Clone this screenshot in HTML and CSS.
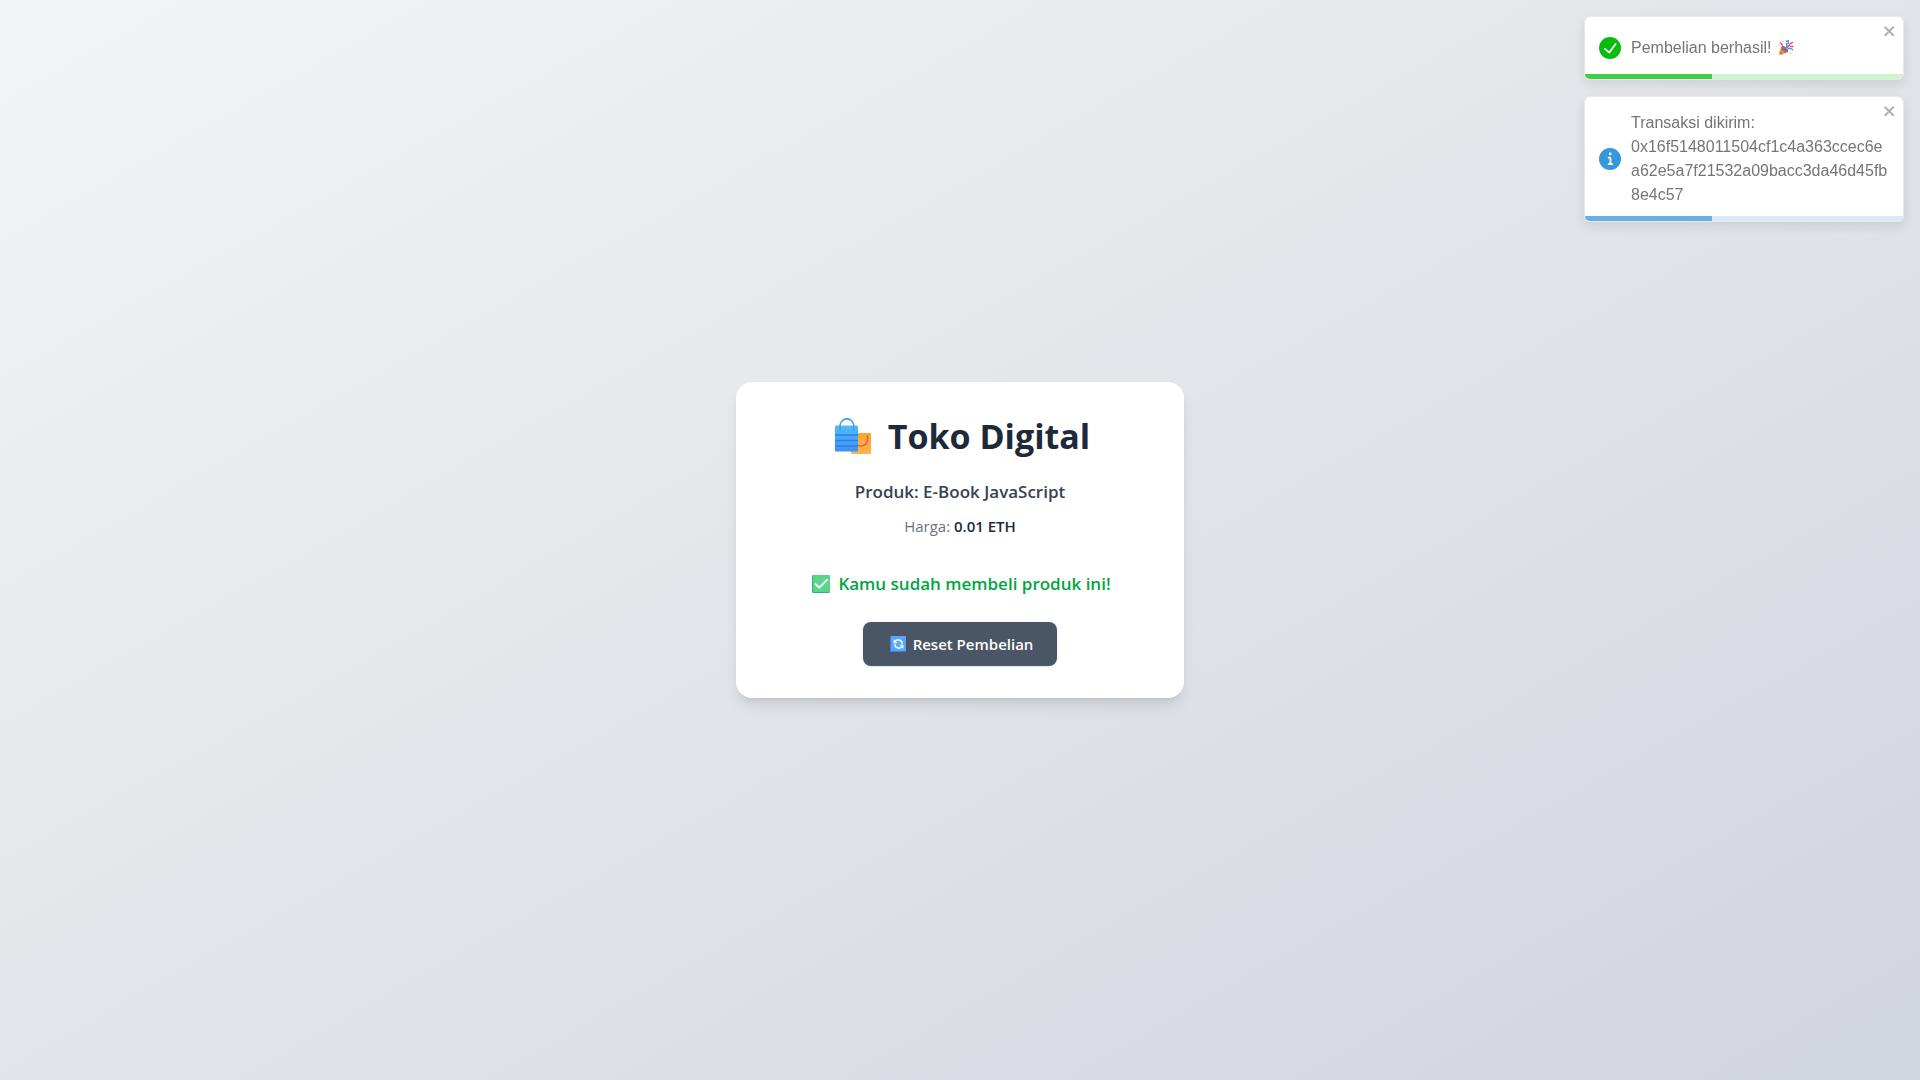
FILE: index.html
```html
<!DOCTYPE html>
<html lang="id">
<head>
  <meta charset="utf-8">
  <meta name="viewport" content="width=device-width, initial-scale=1">
  <title>Toko Digital</title>
  <link rel="stylesheet" href="styles.css">
</head>
<body>
  <main class="page">
    <section class="card">
      <h1 class="title">
        <svg class="title-icon" viewBox="0 0 48 40" aria-hidden="true">
          <defs>
            <linearGradient id="bag-blue" x1="0" y1="0" x2="0" y2="1">
              <stop offset="0" stop-color="#50bdfa"/>
              <stop offset="1" stop-color="#3f8ffb"/>
            </linearGradient>
            <linearGradient id="bag-orange" x1="0" y1="0" x2="0" y2="1">
              <stop offset="0" stop-color="#f9a431"/>
              <stop offset="1" stop-color="#ffb350"/>
            </linearGradient>
          </defs>
          <rect x="21" y="19" width="20" height="21" rx="1" fill="url(#bag-orange)"/>
          <path d="M37.500 22v3.500a6.500 6.500 0 0 1-10 5.500" fill="none" stroke="#ea5a34" stroke-width="1.400" stroke-linecap="round"/>
          <rect x="5" y="11.500" width="23" height="26" rx="1" fill="url(#bag-blue)"/>
          <path d="M5 21h23M5 26.500h23M5 32h23" stroke="#2f7de2" stroke-width="1.500"/>
          <path d="M10 16.500V12a6.800 7 0 0 1 13.800 0v4.500" fill="none" stroke="#3f9fe8" stroke-width="1.600" stroke-linecap="round"/>
        </svg>
        <span>Toko Digital</span>
      </h1>
      <p class="product">Produk: E-Book JavaScript</p>
      <p class="price">Harga: <strong class="amount">0.01 ETH</strong></p>
      <p class="status">
        <svg class="status-icon" viewBox="0 0 24 20" aria-hidden="true">
          <rect x="3" y="1" width="18" height="18" rx="1.500" fill="#3fa873"/>
          <rect x="4" y="1" width="17" height="17" rx="1.500" fill="#59d58c"/>
          <path d="M6.500 10l3.700 3.700 8-8" fill="none" stroke="#fff" stroke-width="1.800" stroke-linecap="round" stroke-linejoin="round"/>
        </svg>
        <span>Kamu sudah membeli produk ini!</span>
      </p>
      <button class="reset" type="button">
        <svg class="reset-icon" viewBox="0 0 22 18" aria-hidden="true">
          <rect x="3" y="1" width="16" height="16" rx="1" fill="#3d7ce0"/>
          <rect x="4" y="1" width="15" height="15" rx="1" fill="#58a6fb"/>
          <path d="M8 6.500c2-2.500 7-2 7.200 2.200M15 11.500c-2 2.500-7 2-7.200-2.200" fill="none" stroke="#e9f3ff" stroke-width="1.700"/>
          <path d="M6.500 4v4.200h4.200zM16.500 14V9.800h-4.200z" fill="#e9f3ff"/>
        </svg>
        <span>Reset Pembelian</span>
      </button>
    </section>
  </main>

  <aside class="toasts" aria-live="polite">
    <div class="toast toast-success" role="alert">
      <svg class="toast-icon" viewBox="0 0 24 24" aria-hidden="true">
        <path fill="currentColor" d="M12 0a12 12 0 1012 12A12.014 12.014 0 0012 0zm6.927 8.200l-6.845 9.289a1.011 1.011 0 01-1.430.188l-4.888-3.908a1 1 0 111.250-1.562l4.076 3.261 6.227-8.451a1 1 0 111.610 1.183z"/>
      </svg>
      <p class="message">
        Pembelian berhasil!
        <svg class="party" viewBox="0 0 16 16" aria-hidden="true">
          <path d="M0.500 15.500L3.500 6l6.500 6z" fill="#f5a030"/>
          <path d="M2.700 8.600l5 4.500M1.700 11.500l3.200 2.800" stroke="#a0668a" stroke-width="1.200"/>
          <ellipse cx="6.800" cy="9" rx="1.700" ry="4.200" transform="rotate(-45 6.800 9)" fill="#a0645a"/>
          <path d="M7 8.500c2-1.500 2.500-3.500 1-5.500M8 1.200l2.200-.4v3.200" fill="none" stroke="#2e9cf0" stroke-width="1.400"/>
          <path d="M9 9.500c2-1.500 4.500-1.200 6 .5" fill="none" stroke="#2e9cf0" stroke-width="1.400"/>
          <path d="M9 7.500c2-.2 2-2.500 3-3.500s2-.8 2.800-2M2.200 2.500l2.500 3" fill="none" stroke="#ee3ea0" stroke-width="1.400"/>
          <path d="M12 6.500h3.500" stroke="#ee3ea0" stroke-width="1.300"/>
          <circle cx="5" cy="1.500" r=".8" fill="#f9b23c"/>
          <circle cx="12.500" cy="13.500" r=".8" fill="#f9b23c"/>
          <circle cx="1" cy="5.500" r=".7" fill="#f9b23c"/>
        </svg>
      </p>
      <button class="close" type="button" aria-label="Tutup">
        <svg class="close-icon" viewBox="0 0 14 16" aria-hidden="true">
          <path fill="currentColor" fill-rule="evenodd" d="M7.710 8.230l3.750 3.750-1.480 1.480-3.750-3.750-3.750 3.750L1 11.980l3.750-3.750L1 4.480 2.480 3l3.750 3.750L9.980 3l1.480 1.480-3.750 3.750z"/>
        </svg>
      </button>
      <div class="track"><div class="bar" style="width: 40%"></div></div>
    </div>
    <div class="toast toast-info" role="alert">
      <svg class="toast-icon" viewBox="0 0 24 24" aria-hidden="true">
        <path fill="currentColor" d="M12 0a12 12 0 1012 12A12.013 12.013 0 0012 0zm.25 5a1.500 1.500 0 11-1.500 1.500 1.500 1.500 0 011.500-1.500zm2.250 13.500h-4a1 1 0 010-2h.75a.25.25 0 00.25-.25v-4.500a.25.25 0 00-.25-.25h-.75a1 1 0 010-2h1a2 2 0 012 2v4.750a.25.25 0 00.25.25h.75a1 1 0 110 2z"/>
      </svg>
      <p class="message">Transaksi dikirim: 0x16f5148011504cf1c4a363ccec6ea62e5a7f21532a09bacc3da46d45fb8e4c57</p>
      <button class="close" type="button" aria-label="Tutup">
        <svg class="close-icon" viewBox="0 0 14 16" aria-hidden="true">
          <path fill="currentColor" fill-rule="evenodd" d="M7.710 8.230l3.750 3.750-1.480 1.480-3.750-3.750-3.750 3.750L1 11.980l3.750-3.750L1 4.480 2.480 3l3.750 3.750L9.980 3l1.480 1.480-3.750 3.750z"/>
        </svg>
      </button>
      <div class="track"><div class="bar" style="width: 40%"></div></div>
    </div>
  </aside>
</body>
</html>
```

FILE: styles.css
```css
*,
*::before,
*::after {
  box-sizing: border-box;
}

body,
h1,
p {
  margin: 0;
}

body {
  font-family: "Open Sans", "Noto Sans", sans-serif;
  font-size: 15px;
  line-height: 24px;
}

button {
  border: 0;
  font: inherit;
  cursor: pointer;
}

svg {
  display: block;
  flex: none;
}

.page {
  display: flex;
  align-items: center;
  justify-content: center;
  min-height: 100vh;
  padding: 16px;
  background: linear-gradient(to bottom right in oklab, #f3f4f6, #d1d5dc);
}

.card {
  display: flex;
  flex-direction: column;
  align-items: center;
  width: 100%;
  max-width: 448px;
  padding: 32px;
  border-radius: 16px;
  background: #fff;
  box-shadow: 0 10px 15px -3px rgba(0, 0, 0, 0.1), 0 4px 6px -4px rgba(0, 0, 0, 0.1);
}

.title {
  display: flex;
  align-items: flex-start;
  gap: 10px;
  margin-bottom: 20px;
  color: #1e2939;
  font-size: 34px;
  font-weight: 700;
  line-height: 44px;
}

.title-icon {
  width: 48px;
  height: 40px;
}

.product {
  margin-bottom: 8px;
  color: #364153;
  font-size: 17px;
  font-weight: 600;
  line-height: 28px;
}

.price {
  margin-bottom: 32px;
  color: #6a7282;
}

.amount {
  color: #1e2939;
  font-weight: 600;
}

.status {
  display: flex;
  align-items: center;
  gap: 5px;
  margin-bottom: 24px;
  color: #00a63e;
  font-size: 17px;
  font-weight: 600;
  line-height: 28px;
}

.status-icon {
  width: 24px;
  height: 20px;
}

.reset {
  display: flex;
  align-items: center;
  gap: 4px;
  padding: 10px 24px;
  border-radius: 8px;
  background: #4a5565;
  color: #fff;
  font-weight: 600;
  box-shadow: 0 1px 3px rgba(0, 0, 0, 0.1), 0 1px 2px -1px rgba(0, 0, 0, 0.1);
}

.reset-icon {
  width: 22px;
  height: 18px;
}

.toasts {
  position: fixed;
  top: 16px;
  right: 16px;
  display: flex;
  flex-direction: column;
  gap: 16px;
  width: 320px;
  font-family: "Liberation Sans", Arial, sans-serif;
  font-size: 16px;
}

.toast {
  position: relative;
  display: flex;
  align-items: center;
  gap: 10px;
  min-height: 64px;
  padding: 14px;
  overflow: hidden;
  border: 1px solid #e5e7eb;
  border-radius: 6px;
  background: #fff;
  color: #757575;
  box-shadow: 0 4px 12px rgba(0, 0, 0, 0.1);
}

.toast-success {
  --accent: #07bc0c;
}

.toast-info {
  --accent: #3498db;
}

.toast-icon {
  width: 22px;
  height: 22px;
  color: var(--accent);
}

.message {
  flex: 1;
  min-width: 0;
  overflow-wrap: anywhere;
}

.party {
  display: inline-block;
  width: 16px;
  height: 16px;
  margin-left: 2px;
  vertical-align: -3px;
}

.close {
  position: absolute;
  top: 6px;
  right: 6px;
  padding: 0;
  background: transparent;
  color: #000;
  opacity: 0.3;
}

.close-icon {
  width: 14px;
  height: 16px;
}

.track {
  position: absolute;
  right: 0;
  bottom: 0;
  left: 0;
  height: 5px;
  background: color-mix(in srgb, var(--accent) 20%, transparent);
}

.bar {
  height: 100%;
  background: var(--accent);
  opacity: 0.7;
}
```
